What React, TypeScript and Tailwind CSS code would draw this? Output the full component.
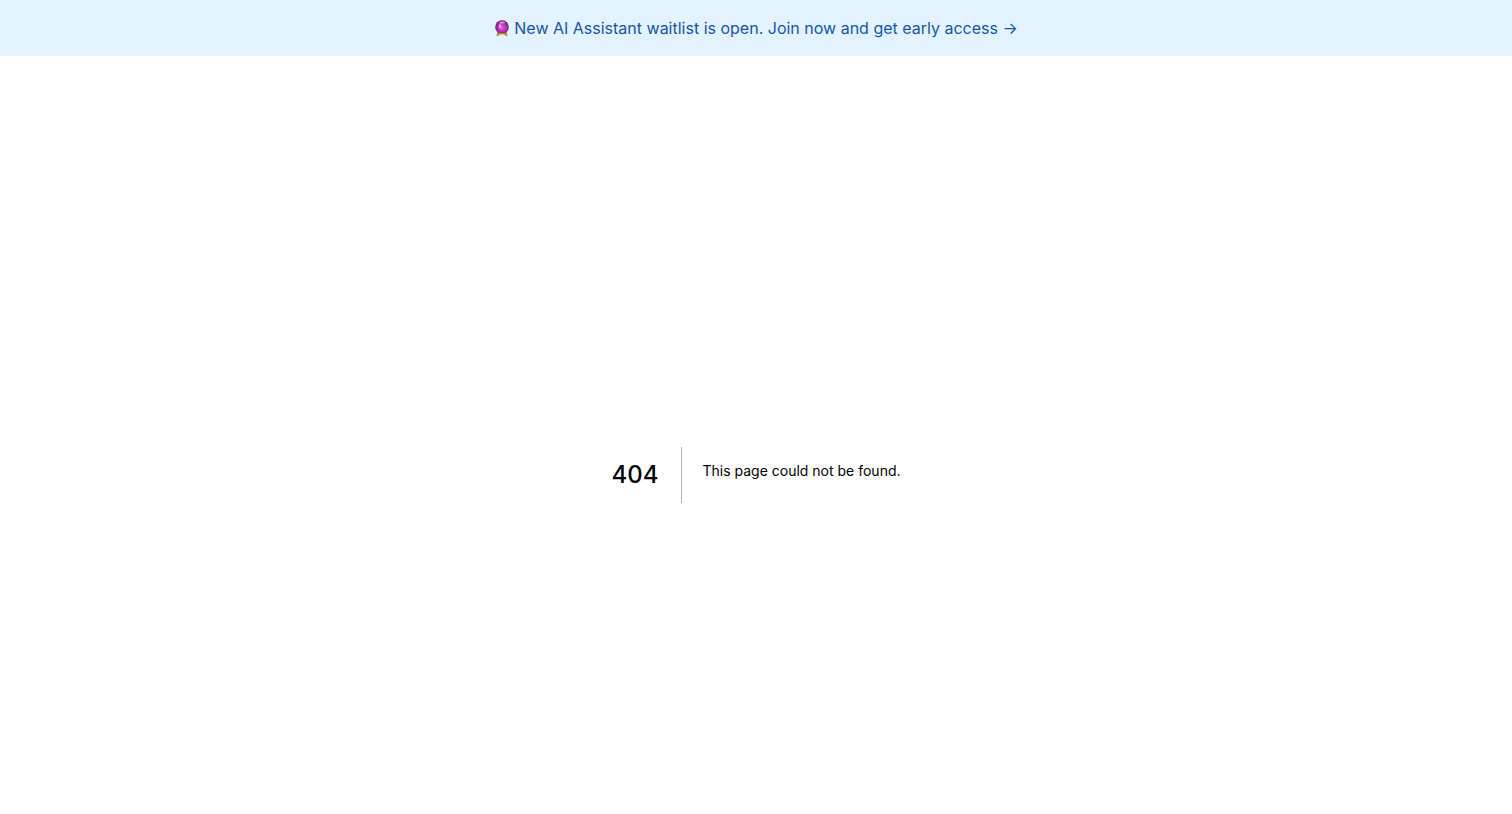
import React from 'react';

const CrystalBall: React.FC = () => (
  <svg viewBox="0 0 16 18" className="h-[18px] w-4 shrink-0" aria-hidden="true">
    <defs>
      <radialGradient id="ball" cx="0.5" cy="0.55" r="0.55">
        <stop offset="0" stopColor="#e264dc" />
        <stop offset="0.5" stopColor="#bb35bb" />
        <stop offset="0.85" stopColor="#7f1c8c" />
        <stop offset="1" stopColor="#55155f" />
      </radialGradient>
      <linearGradient id="stand" x1="0" x2="1" y1="0" y2="0">
        <stop offset="0" stopColor="#a5652a" />
        <stop offset="0.5" stopColor="#f2c14e" />
        <stop offset="1" stopColor="#a5652a" />
      </linearGradient>
    </defs>
    <circle cx="8" cy="8" r="6.8" fill="url(#ball)" />
    <path d="M4.6 3.6C6.4 2 9.6 2 11.4 3.6 10 5 6 5 4.6 3.6z" fill="#f3b5f0" opacity="0.75" />
    <ellipse cx="6" cy="7.2" rx="1.2" ry="2.2" fill="#f9c9f7" opacity="0.7" />
    <path
      d="M3.3 13c2.6 1.6 6.8 1.6 9.4 0l.3 2.4.9 1.4h-2.6l-.9-1.1H5.6l-.9 1.1H2.1l.9-1.4z"
      fill="url(#stand)"
    />
    <path d="M3.3 13c2.6 1.6 6.8 1.6 9.4 0" fill="none" stroke="#6b3a2a" strokeWidth="0.7" />
  </svg>
);

const Banner: React.FC = () => (
  <header className="flex h-14 items-center justify-center bg-[#e3f2ff] px-4">
    <a href="#waitlist" className="flex items-center gap-1 text-base leading-6 text-[#1757a6]">
      <CrystalBall />
      <span>New AI Assistant waitlist is open. Join now and get early access →</span>
    </a>
  </header>
);

const NotFound: React.FC = () => (
  <main className="flex flex-1 items-center justify-center pt-20 text-black">
    <div className="flex items-start">
      <h1 className="mr-5 border-r border-black/30 py-1 pr-[23px] text-2xl leading-[48px] font-medium">404</h1>
      <h2 className="mt-[10px] text-sm leading-7">This page could not be found.</h2>
    </div>
  </main>
);

export default function App() {
  return (
    <div className="flex min-h-screen flex-col bg-white font-['Inter',sans-serif]">
      <Banner />
      <NotFound />
    </div>
  );
}
